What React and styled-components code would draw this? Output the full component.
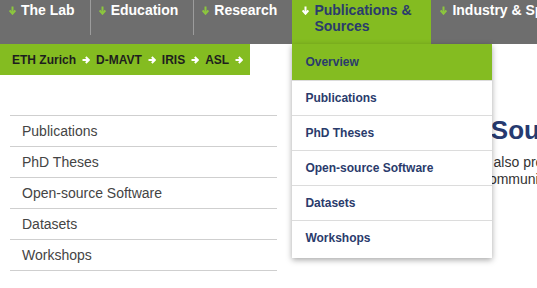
import React from "react";
import styled, { createGlobalStyle } from "styled-components";

const GREEN = "#84bc21";
const NAVY = "#2a3b6c";

const Global = createGlobalStyle`
  html, body { margin: 0; padding: 0; background: #fff; overflow: hidden; }
  body { font-family: "Liberation Sans", Arial, sans-serif; }
`;

const Page = styled.div`
  width: 537px;
  height: 288px;
  overflow: hidden;
`;

const NavBar = styled.nav`
  display: flex;
  height: 44px;
  background: #6e6e6e;
  position: relative;
  z-index: 5;
`;

const NavItem = styled.div`
  position: relative;
  display: flex;
  align-items: flex-start;
  gap: 5px;
  height: 44px;
  box-sizing: border-box;
  padding: 2px ${(p) => (p.$active ? 17 : 15)}px 0 ${(p) => (p.$active ? 10 : 9)}px;
  background: ${(p) => (p.$active ? GREEN : "transparent")};
  flex-shrink: 0;
  &::before {
    content: "";
    display: ${(p) => (p.$sep ? "block" : "none")};
    position: absolute;
    left: 0;
    top: 0;
    width: 1px;
    height: 35px;
    background: #9c9c9c;
  }
`;

const NavLabel = styled.span`
  font-size: 14px;
  font-weight: bold;
  line-height: 16px;
  color: ${(p) => (p.$active ? NAVY : "#fff")};
  max-width: ${(p) => (p.$active ? "100px" : "none")};
  white-space: ${(p) => (p.$active ? "normal" : "nowrap")};
`;

const ArrowBox = styled.span`
  display: inline-flex;
  margin-top: 4px;
  width: 7px;
  flex-shrink: 0;
`;

const DownArrow = ({ color }) => (
  <ArrowBox>
    <svg width="7" height="9" viewBox="0 0 7 9">
      <path d="M3.5 0.5V7.5" stroke={color} strokeWidth="2" fill="none" />
      <path d="M0.6 4.4L3.5 7.7L6.4 4.4" stroke={color} strokeWidth="2" fill="none" />
    </svg>
  </ArrowBox>
);

const Dropdown = styled.ul`
  position: absolute;
  top: 44px;
  left: 0;
  width: 200px;
  margin: 0;
  padding: 0 0 3px;
  list-style: none;
  background: #fff;
  box-shadow: 0 2px 6px rgba(0, 0, 0, 0.35);
`;

const DropItem = styled.li`
  box-sizing: border-box;
  height: ${(p) => (p.$first ? 36 : 35)}px;
  line-height: ${(p) => (p.$first ? 36 : 34)}px;
  padding-left: 13px;
  font-size: 12px;
  font-weight: bold;
  color: ${NAVY};
  background: ${(p) => (p.$first ? GREEN : "#fff")};
  border-top: ${(p) => (p.$first ? "none" : "1px solid #dcdcdc")};
  white-space: nowrap;
`;

const Breadcrumb = styled.div`
  display: flex;
  align-items: center;
  gap: 6px;
  width: 250px;
  height: 31px;
  box-sizing: border-box;
  padding-left: 12px;
  background: ${GREEN};
`;

const Crumb = styled.span`
  font-size: 12px;
  font-weight: bold;
  color: #1e1e1e;
  white-space: nowrap;
`;

const RightArrow = () => (
  <svg width="8" height="8" viewBox="0 0 8 8">
    <path d="M0.5 4H6.5" stroke="#fff" strokeWidth="2" fill="none" />
    <path d="M3.8 1L6.8 4L3.8 7" stroke="#fff" strokeWidth="2" fill="none" />
  </svg>
);

const Content = styled.div`
  display: flex;
  gap: 26px;
  padding: 40px 0 0 10px;
`;

const SideList = styled.ul`
  margin: 0;
  padding: 0;
  list-style: none;
  width: 267px;
  flex-shrink: 0;
  border-top: 1px solid #cfcfcf;
`;

const SideItem = styled.li`
  height: 31px;
  box-sizing: border-box;
  line-height: 30px;
  padding-left: 12px;
  font-size: 14px;
  color: #444;
  border-bottom: 1px solid #cfcfcf;
`;

const Main = styled.div`
  flex-shrink: 0;
`;

const Heading = styled.h1`
  margin: 0;
  font-size: 26px;
  line-height: 30px;
  font-weight: bold;
  color: #263a70;
  white-space: nowrap;
`;

const Para = styled.p`
  margin: 9px 0 0;
  padding-left: 3px;
  font-size: 14px;
  line-height: 17px;
  color: #333;
  white-space: nowrap;
`;

const navItems = ["The Lab", "Education", "Research", "Publications & Sources", "Industry & Spin-offs"];
const dropItems = ["Overview", "Publications", "PhD Theses", "Open-source Software", "Datasets", "Workshops"];
const sideItems = ["Publications", "PhD Theses", "Open-source Software", "Datasets", "Workshops"];
const crumbs = ["ETH Zurich", "D-MAVT", "IRIS", "ASL"];

export default function App() {
  return (
    <Page>
      <Global />
      <NavBar>
        {navItems.map((label, i) => {
          const active = i === 3;
          return (
            <NavItem key={label} $active={active} $sep={i === 1 || i === 2}>
              <DownArrow color={active ? "#fff" : "#8cc63e"} />
              <NavLabel $active={active}>{label}</NavLabel>
              {active && (
                <Dropdown>
                  {dropItems.map((d, j) => (
                    <DropItem key={d} $first={j === 0}>
                      {d}
                    </DropItem>
                  ))}
                </Dropdown>
              )}
            </NavItem>
          );
        })}
      </NavBar>
      <Breadcrumb>
        {crumbs.map((c) => (
          <React.Fragment key={c}>
            <Crumb>{c}</Crumb>
            <RightArrow />
          </React.Fragment>
        ))}
      </Breadcrumb>
      <Content>
        <SideList>
          {sideItems.map((s) => (
            <SideItem key={s}>{s}</SideItem>
          ))}
        </SideList>
        <Main>
          <Heading>Publications &amp; Sources</Heading>
          <Para>
            In addition to publications, we also provide open-source software
            <br />
            and datasets to the robotics community.
          </Para>
        </Main>
      </Content>
    </Page>
  );
}
